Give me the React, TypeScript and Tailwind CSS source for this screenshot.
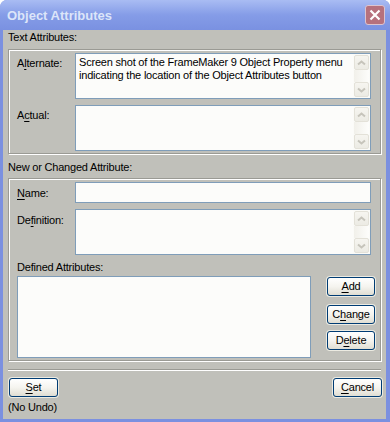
import React from "react";

const U = ({ children }: { children: React.ReactNode }) => (
  <span className="underline decoration-1 underline-offset-[2px]">{children}</span>
);

const Arrow = ({ down }: { down?: boolean }) => (
  <div className="h-[15px] rounded-[2px] border border-[#e3e1d8] bg-linear-to-b from-[#f6f5f0] to-[#ecebe4] flex items-center justify-center">
    <svg width="9" height="6" viewBox="0 0 9 6">
      <path
        d={down ? "M1 1.5 L4.5 4.5 L8 1.5" : "M1 4.5 L4.5 1.5 L8 4.5"}
        fill="none"
        stroke="#c6c4bb"
        strokeWidth="2"
      />
    </svg>
  </div>
);

const ScrollBar = () => (
  <div className="w-[17px] shrink-0 flex flex-col p-px bg-[#fbfbf8]">
    <Arrow />
    <div className="flex-1 bg-linear-to-r from-[#f1f0ea] to-[#fdfdfb]" />
    <Arrow down />
  </div>
);

const TextBox = ({ text }: { text?: string }) => (
  <div className="flex-1 h-[46px] flex border border-[#7f9db9] bg-[#fcfcfa]">
    <div className="flex-1 pl-[3px] pt-[2px]">{text}</div>
    <ScrollBar />
  </div>
);

const XpButton = ({ children, className }: { children: React.ReactNode; className: string }) => (
  <div
    className={`h-[19px] rounded-[3px] border border-[#003c74] bg-linear-to-b from-white via-[#f5f4ef] to-[#e0ded3] shadow-[0_0_0_1px_#ecebe2] flex items-center justify-center ${className}`}
  >
    <span>{children}</span>
  </div>
);

export default function App() {
  return (
    <div className="w-[390px] h-[422px] bg-white">
      <div className="w-full h-full flex flex-col bg-[#7b90e0] rounded-t-[7px] overflow-hidden font-['Liberation_Sans',Arial,sans-serif] text-[11px] leading-[13px] text-black">
        <div className="h-[30px] shrink-0 flex items-center pl-[7px] pr-[5px] bg-linear-to-b from-[#a9bcf3] via-[#859ce7] to-[#7a91e1]">
          <span className="flex-1 font-bold text-[13px] text-[#dce5f9]">Object Attributes</span>
          <div className="w-[20px] h-[20px] rounded-[3px] border border-[#dcc4cf] bg-[#b6717d] flex items-center justify-center">
            <svg width="12" height="12" viewBox="0 0 12 12">
              <path d="M1.5 1.5 L10.5 10.5 M10.5 1.5 L1.5 10.5" stroke="#ffffff" strokeWidth="2.2" />
            </svg>
          </div>
        </div>

        <div className="flex-1 ml-[3px] mr-[4px] mb-[3px] bg-[#c0c0ba] px-[5px] flex flex-col tracking-[-0.2px]">
          <div className="mt-[1px]">Text Attributes:</div>
          <div className="mt-[5px] border border-[#9a9a94] shadow-[inset_1px_1px_0_#fff,1px_1px_0_#fff] pt-[3px] pb-[2px] pl-[8px] pr-[9px] flex flex-col gap-[6px]">
            <div className="flex">
              <div className="w-[58px] pt-[4px]">
                A<U>l</U>ternate:
              </div>
              <TextBox text="Screen shot of the FrameMaker 9 Object Property menu indicating the location of the Object Attributes button" />
            </div>
            <div className="flex">
              <div className="w-[58px] pt-[4px]">
                A<U>c</U>tual:
              </div>
              <TextBox />
            </div>
          </div>

          <div className="mt-[7px]">New or Changed Attribute:</div>
          <div className="mt-[4px] border border-[#9a9a94] shadow-[inset_1px_1px_0_#fff,1px_1px_0_#fff] pt-[3px] pb-[2px] pl-[8px] flex flex-col">
            <div className="flex pr-[9px]">
              <div className="w-[58px] pt-[5px]">
                <U>N</U>ame:
              </div>
              <div className="flex-1 h-[21px] border border-[#7f9db9] bg-[#fcfcfa]" />
            </div>
            <div className="flex pr-[9px] mt-[6px]">
              <div className="w-[58px] pt-[5px]">
                De<U>f</U>inition:
              </div>
              <TextBox />
            </div>
            <div className="mt-[6px]">Defined Attributes:</div>
            <div className="mt-[2px] flex pr-[5px]">
              <div className="w-[294px] h-[82px] border border-[#7f9db9] bg-[#fcfcfa]" />
              <div className="ml-[16px] flex-1 flex flex-col pt-[1px]">
                <XpButton className="w-full">
                  <U>A</U>dd
                </XpButton>
                <XpButton className="w-full mt-[9px]">
                  C<U>h</U>ange
                </XpButton>
                <XpButton className="w-full mt-[7px]">
                  D<U>e</U>lete
                </XpButton>
              </div>
            </div>
          </div>

          <div className="mt-[8px] h-[2px] border-t border-[#9a9a94] border-b border-b-white" />

          <div className="mt-[7px] flex justify-between">
            <XpButton className="w-[49px] ml-[1px]">
              <U>S</U>et
            </XpButton>
            <XpButton className="w-[49px] -mr-[1px]">
              <U>C</U>ancel
            </XpButton>
          </div>
          <div className="mt-[4px]">(No Undo)</div>
        </div>
      </div>
    </div>
  );
}
